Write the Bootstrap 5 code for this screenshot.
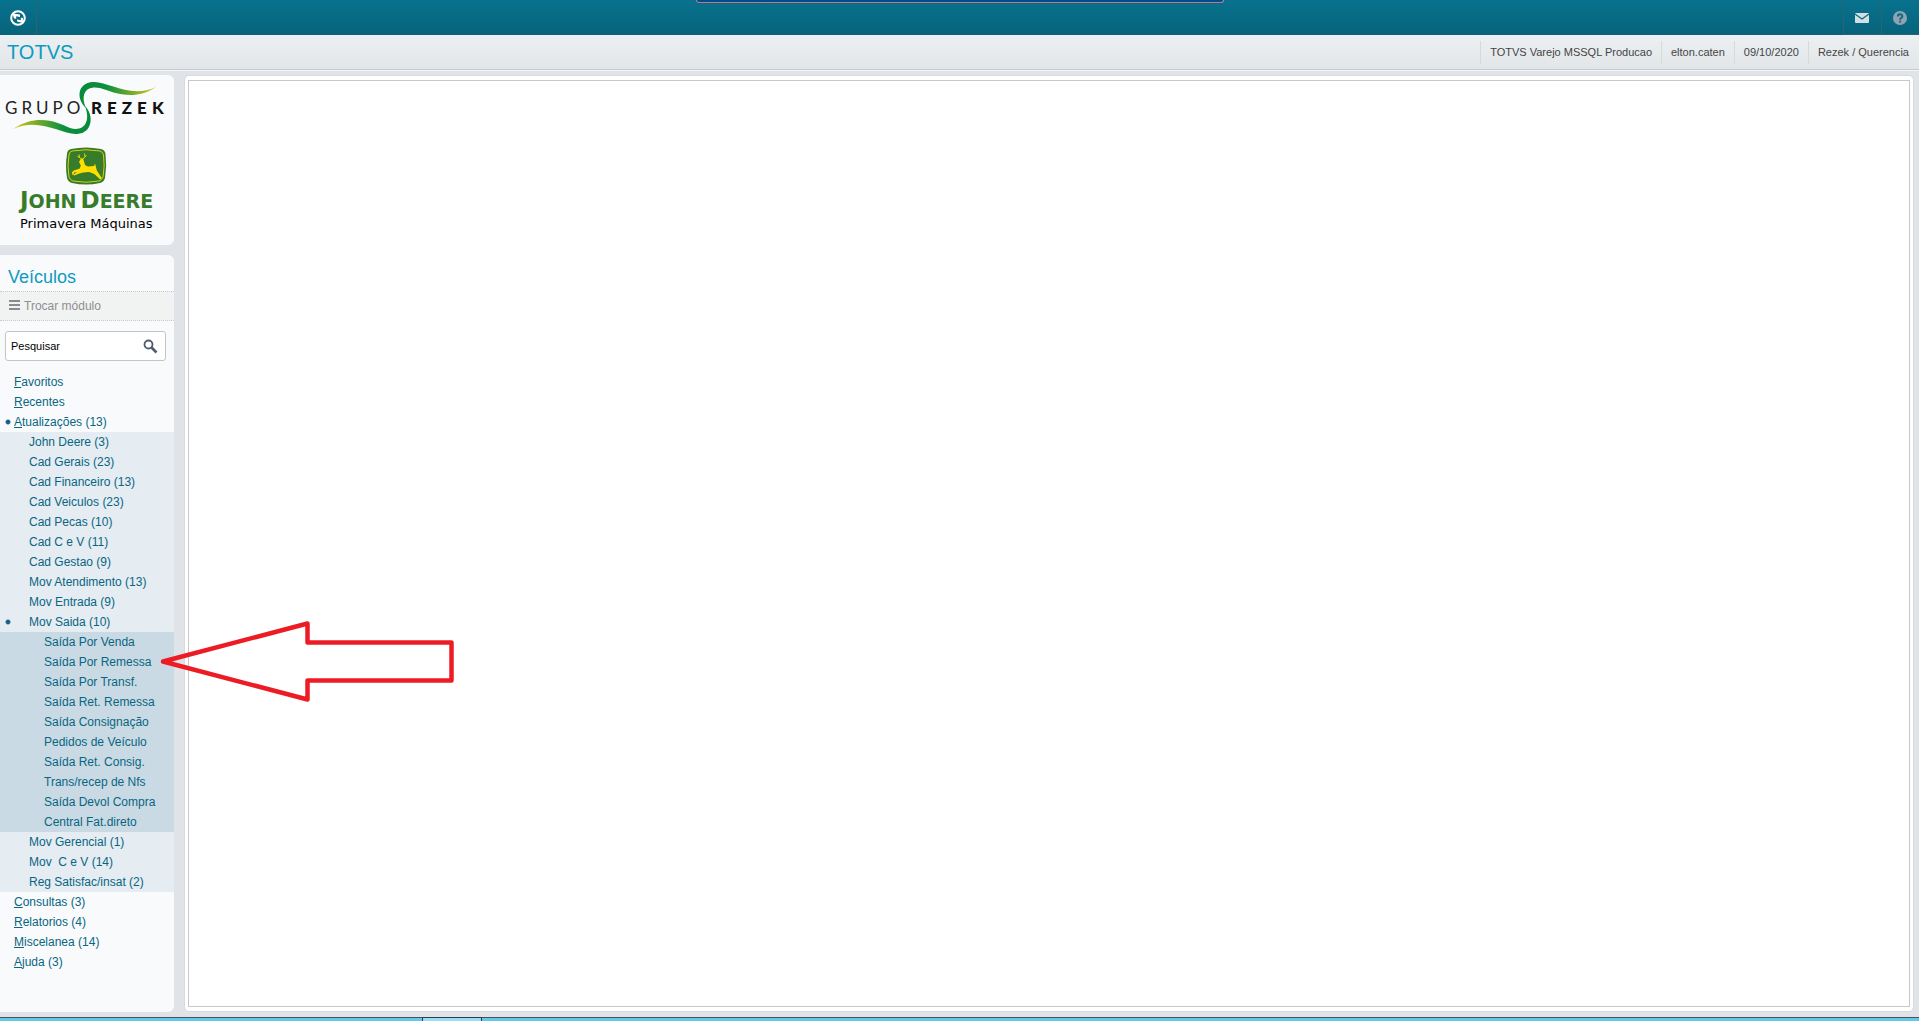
<!DOCTYPE html>
<html lang="pt-BR">
<head>
<meta charset="utf-8">
<meta name="viewport" content="width=device-width, initial-scale=1">
<title>TOTVS - Veículos</title>
<link rel="stylesheet" href="https://cdn.jsdelivr.net/npm/bootstrap@5.3.0/dist/css/bootstrap.min.css">
<style>
body{font-family:"Liberation Sans",Arial,sans-serif;font-size:12px;line-height:20px;color:#444;background:#e0e4e8}
a{color:#086682;text-decoration:none}
a:hover{text-decoration:underline}
u{text-underline-offset:1px}
.topbar{height:35px;background:linear-gradient(#08728e,#07637b)}
.tool{border:0;border-radius:0;padding:0;width:38px;background:transparent}
.tool-start{width:37px;border-right:1px solid #2c6474}
.tool-end{border-left:1px solid #2c6474;border-bottom:1px solid #2c6474;padding-right:2px}
.notch{position:absolute;top:0;left:50%;width:528px;height:3px;margin-left:-264px;background:#054a8c;border:1px solid #8a93a5;border-top:0;border-radius:0 0 3px 3px;box-shadow:0 1px #3c5560}
.headbar{height:35px;background:linear-gradient(#edf0f3,#e2e6e9);border-bottom:1px solid #c4c9cd;box-shadow:0 1px #f4f6f8;padding-right:1px}
.brand{font-size:20px;line-height:34px;color:#0d9bc0;padding-left:7px}
.info{font-size:11px;line-height:23px;padding:0 9px;border-left:1px solid #d6dbd6}
.shell{padding:5px 5px 5px 0;gap:10px}
.side{width:174px;gap:10px}
.panel{background:#f9fafc;border-radius:0 6px 6px 0}
.panel-logo{height:170px}
.title{font-size:18px;line-height:22px;color:#0d9bc0;padding:11px 8px 3px;margin:0;font-weight:400}
.swap{background:#f1f2f2;color:#8e8e93;height:30px;border:0;border-top:1px dotted #ccc;border-bottom:1px dotted #ccc;padding:0 9px;gap:4px}
.seek{margin:10px 8px 11px 5px;height:30px;background:#fff;border:1px solid #c2c6c6;border-radius:3px;padding:0 7px 0 5px}
.seek input{border:0;background:none;padding:0;font-size:11px;color:#000;min-width:0;outline:0}
.seek input::placeholder{color:#000;opacity:1}
.seek button{border:0;background:none;padding:0;line-height:0}
.tree a{display:block;padding-left:14px;white-space:pre}
.tree .lv2{background:#e5ecf2}
.tree .lv2 a{padding-left:29px}
.tree .lv3{background:#cadae4}
.tree .lv3 a{padding-left:44px}
.tree .open{background:radial-gradient(ellipse 3px 3px at 8px 10px,#1c5f86 60%,transparent 100%) no-repeat}
.stage{background:#fff;border-radius:5px;padding:4px 3px;border:1px solid #d8dadd}
.stage-in{border:1px solid #c8c8c8;background:#fff}
.dock{height:4px;background:#62c9ea;border-top:1px solid #44545a}
.dock-tab{width:60px;margin-left:422px;background:#9cdcf3;border:1px solid #26404c;border-bottom:0;margin-top:-1px}
.pointer{position:absolute;left:160px;top:619px}
</style>
<script src="https://cdn.jsdelivr.net/npm/bootstrap@5.3.0/dist/js/bootstrap.bundle.min.js"></script>
</head>
<body>
<div class="d-flex flex-column min-vh-100 position-relative">
<nav class="topbar d-flex flex-shrink-0" aria-label="Barra principal">
<button class="tool tool-start" aria-label="Início"><svg width="18" height="18" viewBox="0 0 18 18"><circle cx="9" cy="9" r="6.8" fill="none" stroke="#fff" stroke-width="2"/><path d="M3.500 4.500L11 5.500v5L5 9.500zM8 8l6 1v5l-6-1.500z" fill="#fff"/><path d="M7.200 7.200l4.600 1v3l-4.600-1z" fill="#08697f"/></svg></button>
<div class="notch"></div>
<button class="tool tool-end ms-auto" aria-label="Mensagens"><svg width="14" height="10" viewBox="0 0 14 10"><rect width="14" height="10" rx="1" fill="#d3dee5"/><path d="M0 1l7 5 7-5" fill="none" stroke="#08697f" stroke-width="1.2"/></svg></button>
<button class="tool tool-end" aria-label="Ajuda"><svg width="14" height="14" viewBox="0 0 14 14"><circle cx="7" cy="7" r="7" fill="#8fa3b0"/><path d="M4.800 5.500c0-3 4.600-2.800 4.600-.3C9.400 6.800 7.100 6.700 7.100 8.700M7.100 9.700v1.800" fill="none" stroke="#08697f" stroke-width="1.900"/></svg></button>
</nav>
<header class="headbar d-flex align-items-center flex-shrink-0">
<div class="brand me-auto">TOTVS</div>
<div class="info">TOTVS Varejo MSSQL Producao</div><div class="info">elton.caten</div><div class="info">09/10/2020</div><div class="info">Rezek / Querencia</div>
</header>
<div class="shell d-flex flex-grow-1">
<aside class="side d-flex flex-column flex-shrink-0">
<div class="panel panel-logo">
<svg width="174" height="170" viewBox="0 75 174 170" role="img" aria-label="Grupo Rezek, John Deere Primavera Máquinas">
<defs><linearGradient id="ga"><stop offset="0" stop-color="#078a3a"/><stop offset=".35" stop-color="#0b9040"/><stop offset="1" stop-color="#d8c510"/></linearGradient><linearGradient id="gb"><stop offset="0" stop-color="#d8c510"/><stop offset=".65" stop-color="#0b9040"/><stop offset="1" stop-color="#078a3a"/></linearGradient></defs>
<path d="M86 108C76 99 77 83 93 82C108 81 130 99 156 87C134 102 113 92 100 88C86 85 80 94 86 108Z" fill="url(#ga)"/>
<path d="M85 106C94 115 93 133 77 134C62 135 40 117 13 129C37 113 57 122 70 128C84 132 91 122 85 106Z" fill="url(#gb)"/>
<text x="5" y="114" font-family="Lato" font-size="17" fill="#222" letter-spacing="4">GRUPO</text>
<text x="91" y="114" font-family="Lato" font-weight="900" font-size="17" fill="#111" letter-spacing="5">REZEK</text>
<path d="M71 149Q86 146 101 149Q105 150 105.500 154Q107 166 105 178Q104 182 100 183Q86 186 72 183Q68 182 67 178Q65 166 67 154Q67 150 71 149Z" fill="#367c2b"/>
<path d="M72 151Q86 148.500 100 151Q103 152 103.500 155Q105 166 103 177Q102 180 99 181Q86 183.500 73 181Q70 180 69 177Q67 166 69 155Q69 152 72 151Z" fill="none" stroke="#d9cf10"/>
<path d="M79 162l2-3.500h2l1 3 1 3.500 3 1.500 6-.5 1-2.500 .8 3 1 4 5 7.500-1.500 1.500-6-5.500-5-2-6 .5-4 1-5 2-1-1 4-2.500-3 .5-1.500 3-1-3 2-2 6-2 1-3z" fill="#ffe000"/>
<path d="M81.500 159l-2-1.500-.5-3M80 157.500l-2.500-1M83 159l2-2.500-.5-3M84.500 157l2-1.500" fill="none" stroke="#ffe000" stroke-width=".9"/>
<text x="20" y="208" font-family="DejaVu Sans" font-weight="700" fill="#367c2b" font-size="23">J<tspan font-size="19">OHN</tspan><tspan dx="4">D</tspan><tspan font-size="19">EERE</tspan></text>
<text x="20" y="228" font-family="DejaVu Sans" font-size="13" fill="#000">Primavera Máquinas</text>
</svg></div>
<div class="panel flex-grow-1 pb-4">
<h1 class="title">Veículos</h1>
<button class="swap d-flex align-items-center w-100"><svg width="11" height="12" viewBox="0 0 11 12" stroke="#8a8a90" stroke-width="2"><path d="M0 1h11M0 5h11M0 9h11"/></svg><span>Trocar módulo</span></button>
<form class="seek d-flex align-items-center"><input class="flex-grow-1" type="search" placeholder="Pesquisar" aria-label="Pesquisar"><button type="button" aria-label="Buscar"><svg width="15" height="15" viewBox="0 0 15 15" fill="none" stroke="#4f5b6b"><circle cx="5.500" cy="5.500" r="4" stroke-width="1.800"/><path d="M8.500 8.500l5 5" stroke-width="2.600"/></svg></button></form>
<nav class="tree" aria-label="Menu">
<a href="#"><u>F</u>avoritos</a><a href="#"><u>R</u>ecentes</a><a href="#" class="open"><u>A</u>tualizações (13)</a>
<div class="lv2"><a href="#">John Deere (3)</a><a href="#">Cad Gerais (23)</a><a href="#">Cad Financeiro (13)</a><a href="#">Cad Veiculos (23)</a><a href="#">Cad Pecas (10)</a><a href="#">Cad C e V (11)</a><a href="#">Cad Gestao (9)</a><a href="#">Mov Atendimento (13)</a><a href="#">Mov Entrada (9)</a><a href="#" class="open">Mov Saida (10)</a></div>
<div class="lv3"><a href="#">Saída Por Venda</a><a href="#">Saída Por Remessa</a><a href="#">Saída Por Transf.</a><a href="#">Saída Ret. Remessa</a><a href="#">Saída Consignação</a><a href="#">Pedidos de Veículo</a><a href="#">Saída Ret. Consig.</a><a href="#">Trans/recep de Nfs</a><a href="#">Saída Devol Compra</a><a href="#">Central Fat.direto</a></div>
<div class="lv2"><a href="#">Mov Gerencial (1)</a><a href="#">Mov  C e V (14)</a><a href="#">Reg Satisfac/insat (2)</a></div>
<a href="#"><u>C</u>onsultas (3)</a><a href="#"><u>R</u>elatorios (4)</a><a href="#"><u>M</u>iscelanea (14)</a><a href="#"><u>A</u>juda (3)</a>
</nav>
</div>
</aside>
<main class="stage flex-grow-1 d-flex"><div class="stage-in flex-grow-1"></div></main>
</div>
<div class="dock d-flex flex-shrink-0"><div class="dock-tab"></div></div>
<svg class="pointer" width="296" height="86" viewBox="160 619 296 86" aria-hidden="true"><path d="M163 661.500L307.500 623.500V642.500H451.500V680.500H307.500V699.500Z" fill="none" stroke="#ed1c24" stroke-width="4.500" stroke-linejoin="round"/></svg>
</div>
</body>
</html>
